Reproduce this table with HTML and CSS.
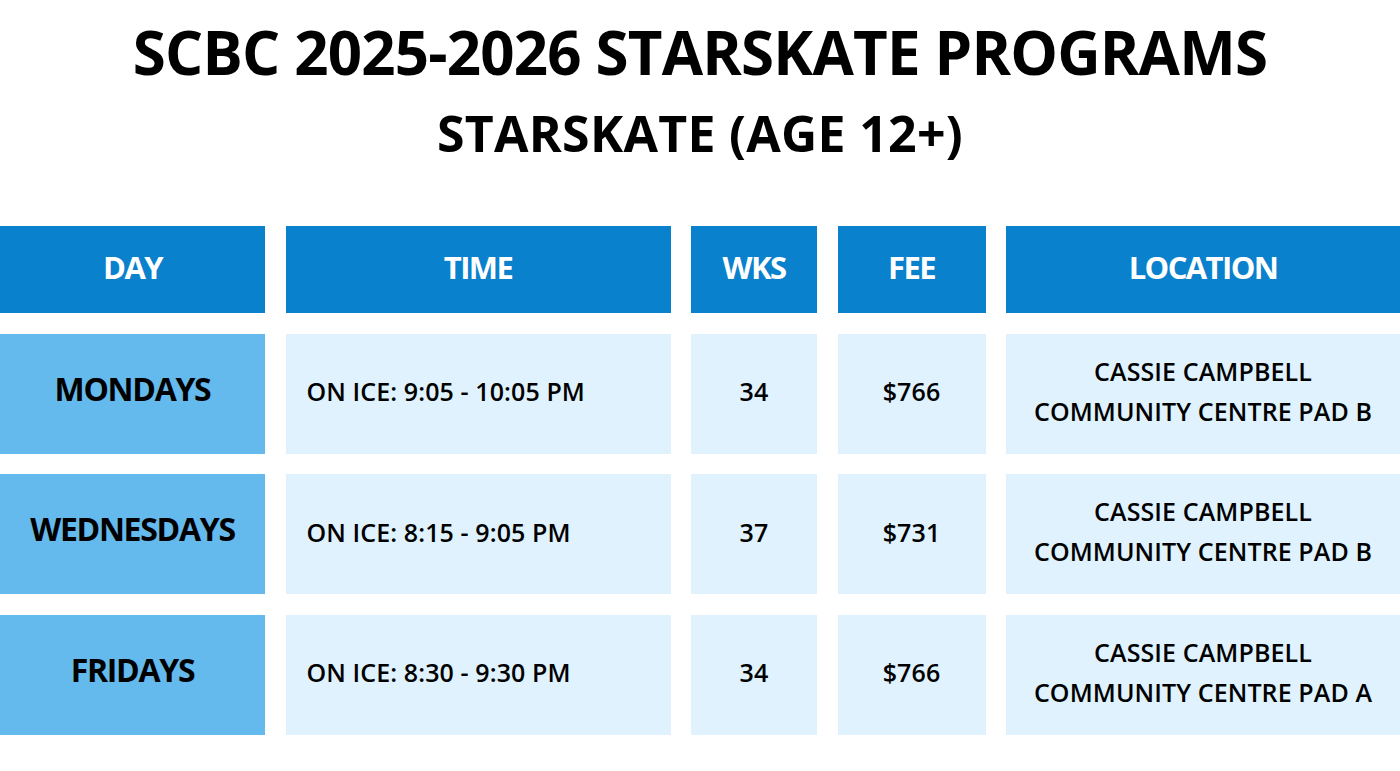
FILE: index.html
```html
<!DOCTYPE html>
<html lang="en">
<head>
<meta charset="utf-8">
<title>SCBC 2025-2026 Starskate Programs</title>
<link rel="stylesheet" href="styles.css">
</head>
<body>
<header class="heading">
  <h1 class="title">SCBC 2025-2026 STARSKATE PROGRAMS</h1>
  <h2 class="subtitle">STARSKATE (AGE 12+)</h2>
</header>
<section class="schedule">
  <div class="cell head">DAY</div>
  <div class="cell head">TIME</div>
  <div class="cell head">WKS</div>
  <div class="cell head">FEE</div>
  <div class="cell head">LOCATION</div>

  <div class="cell day">MONDAYS</div>
  <div class="cell info time">ON ICE: 9:05 - 10:05 PM</div>
  <div class="cell info">34</div>
  <div class="cell info">$766</div>
  <div class="cell info loc">CASSIE CAMPBELL<br>COMMUNITY CENTRE PAD B</div>

  <div class="cell day">WEDNESDAYS</div>
  <div class="cell info time">ON ICE: 8:15 - 9:05 PM</div>
  <div class="cell info">37</div>
  <div class="cell info">$731</div>
  <div class="cell info loc">CASSIE CAMPBELL<br>COMMUNITY CENTRE PAD B</div>

  <div class="cell day">FRIDAYS</div>
  <div class="cell info time">ON ICE: 8:30 - 9:30 PM</div>
  <div class="cell info">34</div>
  <div class="cell info">$766</div>
  <div class="cell info loc">CASSIE CAMPBELL<br>COMMUNITY CENTRE PAD A</div>
</section>
</body>
</html>
```

FILE: styles.css
```css
html, body {
  margin: 0;
  padding: 0;
  background: #ffffff;
}

body {
  width: 1400px;
  height: 771px;
  overflow: hidden;
  font-family: "Open Sans", "Liberation Sans", sans-serif;
  color: #000;
}

.heading {
  display: flex;
  flex-direction: column;
  align-items: center;
  padding-top: 12px;
}

.title {
  margin: 0;
  font-size: 60px;
  font-weight: 700;
  line-height: 80px;
  letter-spacing: -0.8px;
}

.subtitle {
  margin: 11px 0 0;
  font-size: 50px;
  font-weight: 700;
  line-height: 60px;
  letter-spacing: 0.3px;
}

.schedule {
  margin-top: 63px;
  display: grid;
  grid-template-columns: 265px 385px 126px 148px 1fr;
  grid-template-rows: 87px 120px 120px 120px;
  column-gap: 20.5px;
  row-gap: 20.5px;
}

.cell {
  display: flex;
  align-items: center;
  justify-content: center;
  text-align: center;
}

.head {
  background: #0981cd;
  color: #ffffff;
  font-size: 31px;
  font-weight: 700;
  letter-spacing: -1.6px;
  padding-bottom: 6px;
}

.day {
  background: #64b9ed;
  font-size: 32px;
  font-weight: 700;
  letter-spacing: -1.3px;
  padding-bottom: 11px;
}

.info {
  background: #dff2fd;
  font-size: 25px;
  font-weight: 600;
  letter-spacing: 0.1px;
  padding-bottom: 5px;
}

.time {
  justify-content: flex-start;
  padding-left: 21px;
}

.loc {
  line-height: 40px;
  padding-bottom: 6px;
}
```
